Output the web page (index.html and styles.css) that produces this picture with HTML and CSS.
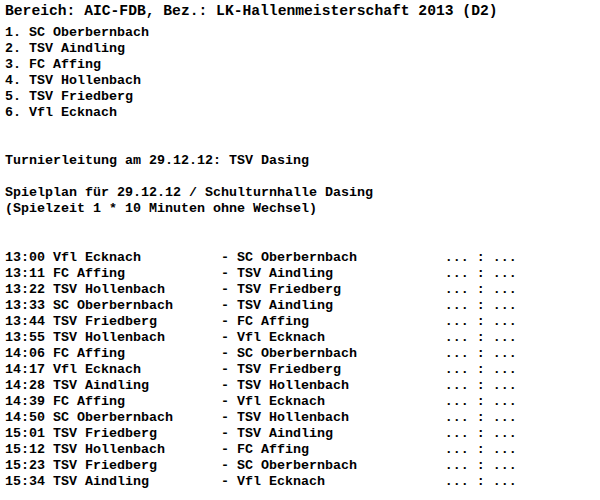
FILE: index.html
```html
<!DOCTYPE html>
<html lang="de">
<head>
<meta charset="utf-8">
<title>LK-Hallenmeisterschaft 2013 (D2)</title>
<link rel="stylesheet" href="styles.css">
</head>
<body>
<div class="page">
  <div class="header">Bereich: AIC-FDB, Bez.: LK-Hallenmeisterschaft 2013 (D2)</div>
  <ol class="teams">
    <li>1. SC Oberbernbach</li>
    <li>2. TSV Aindling</li>
    <li>3. FC Affing</li>
    <li>4. TSV Hollenbach</li>
    <li>5. TSV Friedberg</li>
    <li>6. Vfl Ecknach</li>
  </ol>
  <p class="lead">Turnierleitung am 29.12.12: TSV Dasing</p>
  <p class="plan">Spielplan für 29.12.12 / Schulturnhalle Dasing<br>(Spielzeit 1 * 10 Minuten ohne Wechsel)</p>
  <div class="games">
    <div class="row"><span>13:00</span><span>Vfl Ecknach</span><span>-</span><span>SC Oberbernbach</span><span class="score">... : ...</span></div>
    <div class="row"><span>13:11</span><span>FC Affing</span><span>-</span><span>TSV Aindling</span><span class="score">... : ...</span></div>
    <div class="row"><span>13:22</span><span>TSV Hollenbach</span><span>-</span><span>TSV Friedberg</span><span class="score">... : ...</span></div>
    <div class="row"><span>13:33</span><span>SC Oberbernbach</span><span>-</span><span>TSV Aindling</span><span class="score">... : ...</span></div>
    <div class="row"><span>13:44</span><span>TSV Friedberg</span><span>-</span><span>FC Affing</span><span class="score">... : ...</span></div>
    <div class="row"><span>13:55</span><span>TSV Hollenbach</span><span>-</span><span>Vfl Ecknach</span><span class="score">... : ...</span></div>
    <div class="row"><span>14:06</span><span>FC Affing</span><span>-</span><span>SC Oberbernbach</span><span class="score">... : ...</span></div>
    <div class="row"><span>14:17</span><span>Vfl Ecknach</span><span>-</span><span>TSV Friedberg</span><span class="score">... : ...</span></div>
    <div class="row"><span>14:28</span><span>TSV Aindling</span><span>-</span><span>TSV Hollenbach</span><span class="score">... : ...</span></div>
    <div class="row"><span>14:39</span><span>FC Affing</span><span>-</span><span>Vfl Ecknach</span><span class="score">... : ...</span></div>
    <div class="row"><span>14:50</span><span>SC Oberbernbach</span><span>-</span><span>TSV Hollenbach</span><span class="score">... : ...</span></div>
    <div class="row"><span>15:01</span><span>TSV Friedberg</span><span>-</span><span>TSV Aindling</span><span class="score">... : ...</span></div>
    <div class="row"><span>15:12</span><span>TSV Hollenbach</span><span>-</span><span>FC Affing</span><span class="score">... : ...</span></div>
    <div class="row"><span>15:23</span><span>TSV Friedberg</span><span>-</span><span>SC Oberbernbach</span><span class="score">... : ...</span></div>
    <div class="row"><span>15:34</span><span>TSV Aindling</span><span>-</span><span>Vfl Ecknach</span><span class="score">... : ...</span></div>
  </div>
</div>
</body>
</html>
```

FILE: styles.css
```css
html, body {
  margin: 0;
  padding: 0;
  background: #ffffff;
}

.page {
  padding: 3px 0 0 5px;
  font-family: "Liberation Mono", "Courier New", monospace;
  font-weight: bold;
  font-size: 13.333px;
  line-height: 16px;
  color: #000000;
}

.header {
  font-size: 14.667px;
  line-height: 17px;
  margin-bottom: 5px;
  white-space: pre;
}

.teams {
  list-style: none;
  margin: 0;
  padding: 0;
}

.teams li {
  white-space: pre;
}

.lead {
  margin: 32px 0 16px;
  white-space: pre;
}

.plan {
  margin: 0 0 33px;
  white-space: pre;
}

.games {
  display: flex;
  flex-direction: column;
}

.row {
  display: grid;
  grid-template-columns: 6ch 21ch 2ch 26ch auto;
  white-space: pre;
}
```
